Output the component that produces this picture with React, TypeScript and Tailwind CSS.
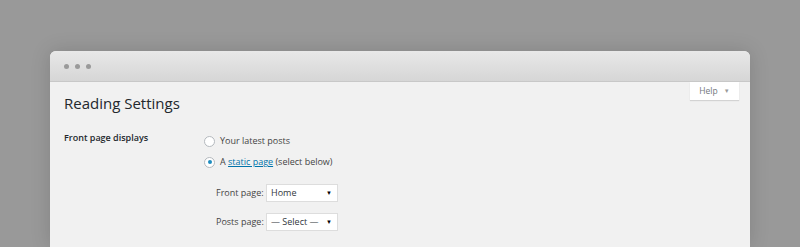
export default function App() {
  return (
    <div
      className="h-[247px] w-[800px] overflow-hidden bg-[#999999] pt-[51px] pl-[50px]"
      style={{ fontFamily: '"Open Sans", sans-serif' }}
    >
      <div className="flex h-[196px] w-[700px] flex-col overflow-hidden rounded-t-[6px] bg-[#f1f1f1] shadow-[0_0_20px_rgba(0,0,0,0.15)]">
        <div className="flex h-[31px] shrink-0 items-center gap-[6px] border-b border-[#c8c8c8] bg-gradient-to-b from-[#e8e8e8] to-[#d6d6d6] pl-[14px]">
          <span className="h-[5px] w-[5px] rounded-full bg-[#9a9a9a]" />
          <span className="h-[5px] w-[5px] rounded-full bg-[#9a9a9a]" />
          <span className="h-[5px] w-[5px] rounded-full bg-[#9a9a9a]" />
        </div>
        <div className="relative flex-1 pl-[14px]">
          <div className="absolute right-[11px] top-0 flex h-[18px] w-[49px] items-center justify-center gap-[6px] bg-white text-[8.5px] text-[#72777c] shadow-[0_1px_1px_rgba(0,0,0,0.12)]">
            <span>Help</span>
            <span className="text-[6px] text-[#999]">▼</span>
          </div>
          <h1 className="pt-[11px] text-[15px] leading-[20px] text-[#23282d]">Reading Settings</h1>
          <div className="mt-[21px] flex">
            <div className="-mt-[3px] w-[140px] text-[9px] font-semibold leading-[14px] text-[#23282d]">
              Front page displays
            </div>
            <div className="flex flex-col text-[9px] leading-[14px] text-[#444]">
              <label className="flex items-center gap-[5px]">
                <span className="h-[11px] w-[11px] rounded-full border border-[#b4b9be] bg-white" />
                Your latest posts
              </label>
              <label className="mt-[7px] flex items-center gap-[5px]">
                <span className="flex h-[11px] w-[11px] items-center justify-center rounded-full border border-[#b4b9be] bg-white">
                  <span className="h-[4px] w-[4px] rounded-full bg-[#1e8cbe]" />
                </span>
                <span>
                  A <span className="text-[#0073aa] underline">static page</span> (select below)
                </span>
              </label>
              <div className="mt-[15px] flex flex-col gap-[11px] pl-[12px]">
                <div className="flex items-center gap-[4px] whitespace-nowrap">
                  <span className="w-[46px]">Front page:</span>
                  <div className="flex h-[18px] w-[72px] items-center justify-between border border-[#ddd] bg-white pl-[4px] pr-[5px] text-[9px] text-[#32373c]">
                    Home
                    <span className="text-[6px] text-black">▼</span>
                  </div>
                </div>
                <div className="flex items-center gap-[4px] whitespace-nowrap">
                  <span className="w-[46px]">Posts page:</span>
                  <div className="flex h-[18px] w-[72px] items-center justify-between border border-[#ddd] bg-white pl-[4px] pr-[5px] text-[9px] text-[#32373c]">
                    — Select —
                    <span className="text-[6px] text-black">▼</span>
                  </div>
                </div>
              </div>
            </div>
          </div>
        </div>
      </div>
    </div>
  );
}
